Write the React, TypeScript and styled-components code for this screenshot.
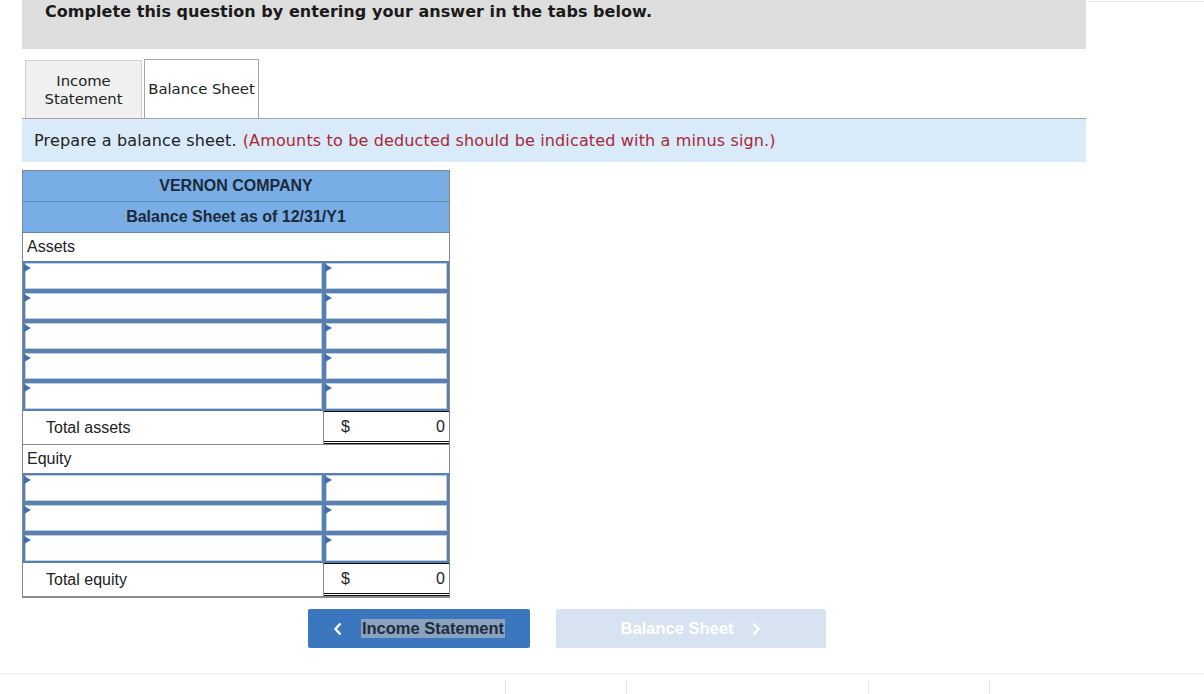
import styled, { createGlobalStyle } from 'styled-components'

const GlobalStyle = createGlobalStyle`
  html, body {
    margin: 0;
    padding: 0;
    background: #ffffff;
  }
  body {
    font-family: "DejaVu Sans", Verdana, sans-serif;
    color: #222;
  }
`

const Page = styled.div`
  width: 1204px;
  height: 694px;
  overflow: hidden;
  display: flex;
  flex-direction: column;
`

const TopArea = styled.div`
  display: flex;
  padding-left: 22px;
`

const Main = styled.div`
  width: 1064px;
  display: flex;
  flex-direction: column;
`

const Side = styled.div`
  flex: 1;
  margin-left: 2px;
  margin-top: 1px;
  height: 0;
  border-top: 1px solid #e6e6e6;
`

const Banner = styled.div`
  height: 49px;
  background: #dedede;
  box-sizing: border-box;
  padding: 2px 0 0 23px;
  font-weight: bold;
  font-size: 16px;
  letter-spacing: 0.05px;
  line-height: 20px;
  color: #1a1a1a;
`

const TabBar = styled.div`
  display: flex;
  align-items: flex-end;
  gap: 2px;
  margin-top: 10px;
  padding-left: 3px;
  border-bottom: 1px solid #a6a6a6;
`

const Tab = styled.div<{ $active?: boolean }>`
  box-sizing: border-box;
  height: ${p => (p.$active ? '59px' : '58px')};
  width: ${p => (p.$active ? '115px' : '117px')};
  display: flex;
  align-items: center;
  justify-content: center;
  text-align: center;
  font-size: 14.8px;
  line-height: 18px;
  color: #222;
  background: ${p => (p.$active ? '#ffffff' : '#f0f0f0')};
  border: 1px solid ${p => (p.$active ? '#a6a6a6' : '#cfcfcf')};
  border-bottom: none;
`

const Instruction = styled.div`
  height: 43px;
  background: #d9eaf8;
  display: flex;
  align-items: center;
  padding-left: 12px;
  font-size: 16px;
  letter-spacing: 0.15px;
  color: #222;
`

const Note = styled.span`
  color: #a8283a;
  margin-left: 6px;
`

const Sheet = styled.div`
  margin-top: 8px;
  width: 428px;
  box-sizing: border-box;
  border: 1px solid #8a8a8a;
  font-family: "Liberation Sans", Arial, sans-serif;
  font-size: 16px;
  color: #222;
`

const TitleRow = styled.div`
  height: 30px;
  background: #79ade6;
  border-bottom: 1px solid #6588b0;
  display: flex;
  align-items: center;
  justify-content: center;
  font-weight: bold;
  color: #1c2a3a;
`

const SectionRow = styled.div`
  height: 28px;
  display: flex;
  align-items: center;
  padding-left: 4px;
`

const InputRow = styled.div`
  display: flex;
  height: 30px;
`

const Input = styled.div<{ $wide?: boolean }>`
  position: relative;
  box-sizing: border-box;
  width: ${p => (p.$wide ? '301px' : '125px')};
  height: 30px;
  border: 2px solid #5b7fae;
  box-shadow: inset 0 0 0 1px #b9cfe8;
  background: #fff;

  &::before {
    content: '';
    position: absolute;
    left: -1px;
    top: 1px;
    border-top: 4px solid transparent;
    border-bottom: 4px solid transparent;
    border-left: 7px solid #3f6fb2;
  }
`

const TotalRow = styled.div`
  display: flex;
  height: 33px;
  border-bottom: 1px solid #8a8a8a;
`

const TotalLabel = styled.div`
  width: 301px;
  box-sizing: border-box;
  padding-left: 23px;
  display: flex;
  align-items: center;
  border-right: 1px solid #8a8a8a;
`

const TotalAmount = styled.div`
  flex: 1;
  box-sizing: border-box;
  display: flex;
  align-items: center;
  justify-content: space-between;
  padding: 0 4px 0 17px;
  border-top: 1px solid #111;
  border-bottom: 3px double #111;
`

const Buttons = styled.div`
  display: flex;
  gap: 26px;
  margin: 11px 0 0 286px;
`

const NavButton = styled.div<{ $disabled?: boolean }>`
  height: 39px;
  width: ${p => (p.$disabled ? '270px' : '222px')};
  border-radius: 2px;
  background: ${p => (p.$disabled ? '#d7e3f0' : '#3a77bf')};
  display: flex;
  align-items: center;
  justify-content: center;
  gap: 18px;
  font-family: "Liberation Sans", Arial, sans-serif;
  font-weight: bold;
  font-size: 16.5px;
  color: #fff;
`

const Selected = styled.span`
  background: #8aa2bf;
  color: #1e2c3c;
  padding: 0 1px;
  line-height: 19px;
`

const Footer = styled.div`
  margin-top: 25px;
  border-top: 1px solid #ececec;
  height: 21px;
  position: relative;
`

const Divider = styled.div`
  position: absolute;
  top: 6px;
  bottom: 0;
  width: 1px;
  background: #e6e6e6;
`

const Peek = styled.div`
  position: absolute;
  left: 652px;
  top: 13px;
`

const Chevron = ({ dir, color }: { dir: 'left' | 'right'; color: string }) => (
  <svg width="10" height="14" viewBox="0 0 10 14">
    <path
      d={dir === 'left' ? 'M7.5 1.5 L2.5 7 L7.5 12.5' : 'M2.5 1.5 L7.5 7 L2.5 12.5'}
      fill="none"
      stroke={color}
      strokeWidth="2.4"
    />
  </svg>
)

const inputRows = (n: number) =>
  Array.from({ length: n }).map((_, i) => (
    <InputRow key={i}>
      <Input $wide />
      <Input />
    </InputRow>
  ))

export default function App() {
  return (
    <Page>
      <GlobalStyle />
      <TopArea>
        <Main>
          <Banner>Complete this question by entering your answer in the tabs below.</Banner>
          <TabBar>
            <Tab>Income<br />Statement</Tab>
            <Tab $active>Balance Sheet</Tab>
          </TabBar>
          <Instruction>
            Prepare a balance sheet.
            <Note>(Amounts to be deducted should be indicated with a minus sign.)</Note>
          </Instruction>
          <Sheet>
            <TitleRow>VERNON COMPANY</TitleRow>
            <TitleRow>Balance Sheet as of 12/31/Y1</TitleRow>
            <SectionRow>Assets</SectionRow>
            {inputRows(5)}
            <TotalRow>
              <TotalLabel>Total assets</TotalLabel>
              <TotalAmount><span>$</span><span>0</span></TotalAmount>
            </TotalRow>
            <SectionRow>Equity</SectionRow>
            {inputRows(3)}
            <TotalRow>
              <TotalLabel>Total equity</TotalLabel>
              <TotalAmount><span>$</span><span>0</span></TotalAmount>
            </TotalRow>
          </Sheet>
          <Buttons>
            <NavButton>
              <Chevron dir="left" color="#ffffff" />
              <Selected>Income Statement</Selected>
            </NavButton>
            <NavButton $disabled>
              <span>Balance Sheet</span>
              <Chevron dir="right" color="#ffffff" />
            </NavButton>
          </Buttons>
        </Main>
        <Side />
      </TopArea>
      <Footer>
        {[505, 626, 868, 989].map(x => (
          <Divider key={x} style={{ left: x }} />
        ))}
        <Peek>
          <svg width="90" height="8" viewBox="0 0 90 8">
            <path d="M0 5 H36 M60 5 H88" stroke="#9a9a9a" strokeWidth="2" />
            <path d="M42 8 C42 2 52 1 54 6" fill="none" stroke="#333" strokeWidth="1.6" />
          </svg>
        </Peek>
      </Footer>
    </Page>
  )
}
